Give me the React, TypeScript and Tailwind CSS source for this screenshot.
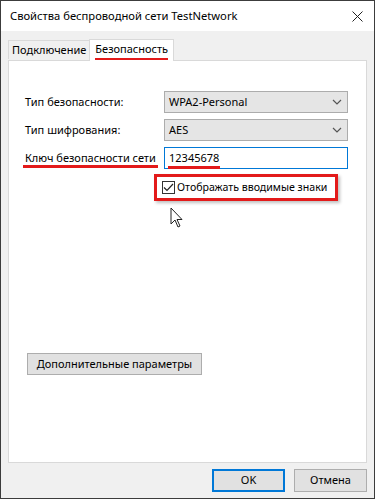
import React from "react";

const font = { fontFamily: '"Noto Sans", "Open Sans", sans-serif' };

function Chevron() {
  return (
    <svg width="10" height="6" viewBox="0 0 10 6" className="mr-[5px]">
      <path d="M1 1 L5 5 L9 1" fill="none" stroke="#555" strokeWidth="1.2" />
    </svg>
  );
}

function Select({ value }: { value: string }) {
  return (
    <div className="w-[184px] h-[22px] bg-[#e5e5e5] border border-[#acacac] flex items-center justify-between pl-[4px]">
      <span>{value}</span>
      <Chevron />
    </div>
  );
}

export default function App() {
  return (
    <div
      className="w-[375px] h-[499px] border border-[#3c3c3c] bg-[#f0f0f0] flex flex-col text-[11px] text-black overflow-hidden whitespace-nowrap"
      style={font}
    >
      <div className="h-[30px] bg-white flex items-center justify-between pl-[9px] pr-[11px] text-[11.2px]">
        <span>Свойства беспроводной сети TestNetwork</span>
        <svg width="11" height="11" viewBox="0 0 11 11">
          <path d="M0.5 0.5 L10.5 10.5 M10.5 0.5 L0.5 10.5" stroke="#222" strokeWidth="1" />
        </svg>
      </div>
      <div className="flex-1 flex flex-col px-[7px] pt-[7px] pb-[6px]">
        <div className="flex items-end h-[22px] relative z-10">
          <div className="h-[19px] px-[3px] border border-b-0 border-[#d9d9d9] bg-[#f0f0f0] flex items-center mb-[1px]">
            Подключение
          </div>
          <div className="h-[22px] px-[5px] border border-b-0 border-[#d9d9d9] bg-white flex items-start pt-[1px] -ml-[1px] -mb-[1px] relative">
            <span className="relative">
              Безопасность
              <span className="absolute left-0 right-0 bottom-[-2px] h-[2px] bg-[#e31a1a]" />
            </span>
          </div>
        </div>
        <div className="h-[403px] border border-[#d9d9d9] bg-white flex flex-col pl-[16px] pt-[30px]">
          <div className="flex items-center h-[22px]">
            <span className="w-[139px]">Тип безопасности:</span>
            <Select value="WPA2-Personal" />
          </div>
          <div className="flex items-center h-[22px] mt-[6px]">
            <span className="w-[139px]">Тип шифрования:</span>
            <Select value="AES" />
          </div>
          <div className="flex items-center h-[22px] mt-[6px]">
            <span className="w-[139px] relative">
              <span className="relative">
                Ключ безопасности сети
                <span className="absolute -left-[2px] right-[-2px] bottom-[-3px] h-[3px] bg-[#e31a1a]" />
              </span>
            </span>
            <div className="w-[184px] h-[22px] border border-[#0078d7] flex items-center pl-[4px]">
              <span className="relative">
                12345678
                <span className="absolute -left-[1px] -right-[1px] bottom-[-3px] h-[3px] bg-[#e31a1a]" />
              </span>
            </div>
          </div>
          <div className="ml-[129px] mt-[5px] w-[184px] h-[27px] border-[3px] border-[#e31a1a] flex items-center pl-[5px] shadow-[2px_2px_3px_rgba(0,0,0,0.25)]">
            <div className="w-[13px] h-[13px] border border-[#333] flex items-center justify-center bg-white shrink-0">
              <svg width="11" height="9" viewBox="0 0 11 9">
                <path d="M1 4.5 L4 7.5 L10 1" fill="none" stroke="#222" strokeWidth="1.2" />
              </svg>
            </div>
            <span className="ml-[2px] text-[10.6px]">Отображать вводимые знаки</span>
          </div>
          <div className="ml-[145px] mt-[6px] h-[22px]">
            <svg width="13" height="22" viewBox="0 0 13 22">
              <path
                d="M1 1 L1 17 L5 13 L8 20 L10 19 L7 12.5 L12 12.5 Z"
                fill="white"
                stroke="#222"
                strokeWidth="1"
                strokeLinejoin="round"
              />
            </svg>
          </div>
          <div className="mt-[124px] ml-[2px] w-[175px] h-[22px] border border-[#adadad] bg-[#e1e1e1] flex items-center justify-center">
            Дополнительные параметры
          </div>
        </div>
        <div className="flex justify-end gap-[9px] mt-[6px]">
          <div className="w-[73px] h-[23px] border-2 border-[#0078d7] bg-[#e1e1e1] flex items-center justify-center">
            OK
          </div>
          <div className="w-[73px] h-[23px] border border-[#adadad] bg-[#e1e1e1] flex items-center justify-center">
            Отмена
          </div>
        </div>
      </div>
    </div>
  );
}
